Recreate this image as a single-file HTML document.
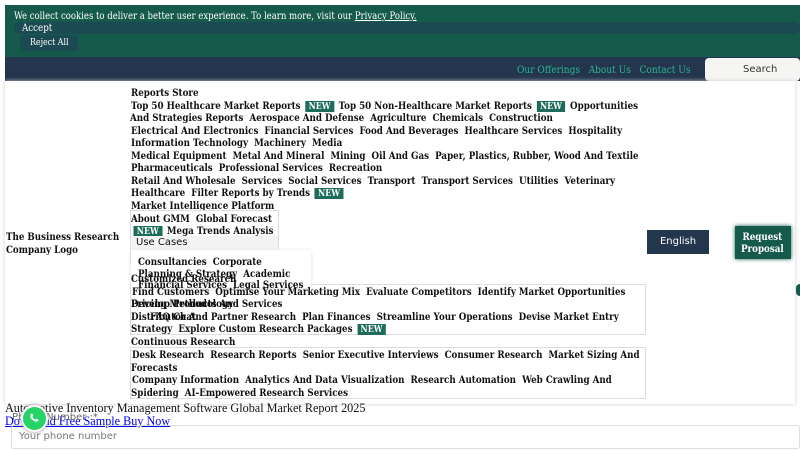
<!DOCTYPE html>
<html><head><meta charset="utf-8"><style>
*{margin:0;padding:0;box-sizing:border-box}
body{width:800px;height:450px;overflow:hidden;background:#fff;position:relative;font-family:"DejaVu Serif","Liberation Serif",serif;font-size:10.5px;font-weight:bold;color:#111}
.a{position:absolute;white-space:nowrap}
.c{transform:scaleX(.83);transform-origin:0 0}
.n{background:#1d6b5a;color:#fff;padding:0 4px;font-size:9.5px;margin:0 2px}
.l{position:absolute;white-space:nowrap;left:131px;transform:scaleX(.83) translateY(1px);transform-origin:0 0}
.box{position:absolute;border:1px solid #ddd;background:#fff}
</style></head><body>
<div class="a" style="left:5px;top:5px;width:795px;height:52px;background:#155a4b"></div>
<div class="a" style="left:5px;top:57px;width:795px;height:24px;background:#24364d"></div>
<div class="a" style="left:14px;top:10px;font-weight:normal;color:#fff;font-size:10.5px;transform:scaleX(.81);transform-origin:0 0">We collect cookies to deliver a better user experience. To learn more, visit our <u>Privacy Policy.</u></div>
<div class="a" style="left:14px;top:22px;width:786px;height:12px;background:#1b4a52;border-radius:6px"></div>
<div class="a c" style="left:22px;top:22px;font-weight:normal;color:#fff">Accept</div>
<div class="a" style="left:20px;top:35px;width:58px;height:16px;background:#1b4a52;border-radius:4px"></div>
<div class="a c" style="left:30px;top:37px;color:#fff;font-weight:normal;font-size:9.5px">Reject All</div>
<div class="a" style="left:517px;top:64px;color:#2bb592;font-weight:normal;font-size:10.5px;transform:scaleX(.86);transform-origin:0 0">Our Offerings&nbsp;&nbsp; About Us&nbsp;&nbsp; Contact Us</div>
<div class="a" style="left:705px;top:58px;width:95px;height:23px;background:#f5f5f3;border-radius:4px;font-family:'DejaVu Sans',sans-serif;font-weight:normal;font-size:10px;color:#333;padding:6px 0 0 38px">Search</div>
<div class="a" style="left:5px;top:81px;width:790px;height:323px;background:#fff;box-shadow:0 0 4px #ccc"></div>
<div class="a c" style="left:6px;top:231px;line-height:13px">The Business Research<br>Company Logo</div>
<div class="l" style="top:86px">Reports Store</div>
<div class="l" style="top:99px">Top 50 Healthcare Market Reports <span class="n">NEW</span> Top 50 Non-Healthcare Market Reports <span class="n">NEW</span> Opportunities</div>
<div class="l" style="left:130px;top:111px">And Strategies Reports&nbsp; Aerospace And Defense&nbsp; Agriculture&nbsp; Chemicals&nbsp; Construction</div>
<div class="l" style="top:124px">Electrical And Electronics&nbsp; Financial Services&nbsp; Food And Beverages&nbsp; Healthcare Services&nbsp; Hospitality</div>
<div class="l" style="top:136px">Information Technology&nbsp; Machinery&nbsp; Media</div>
<div class="l" style="top:149px">Medical Equipment&nbsp; Metal And Mineral&nbsp; Mining&nbsp; Oil And Gas&nbsp; Paper, Plastics, Rubber, Wood And Textile</div>
<div class="l" style="top:161px">Pharmaceuticals&nbsp; Professional Services&nbsp; Recreation</div>
<div class="l" style="top:174px">Retail And Wholesale&nbsp; Services&nbsp; Social Services&nbsp; Transport&nbsp; Transport Services&nbsp; Utilities&nbsp; Veterinary</div>
<div class="l" style="top:186px">Healthcare&nbsp; Filter Reports by Trends <span class="n">NEW</span></div>
<div class="l" style="top:199px">Market Intelligence Platform</div>
<div class="box" style="left:130px;top:210px;width:149px;height:55px"></div>
<div class="l" style="top:212px">About GMM&nbsp; Global Forecast</div>
<div class="l" style="top:224px"><span class="n" style="margin-left:3px">NEW</span> Mega Trends Analysis</div>
<div class="a" style="left:131px;top:236px;width:147px;height:14px;background:#f3f3f3;font-family:'DejaVu Sans',sans-serif;font-weight:normal;font-size:10px;padding:1px 0 0 5px">Use Cases</div>
<div class="box" style="left:130px;top:284px;width:516px;height:51px"></div>
<div class="box" style="left:130px;top:347px;width:516px;height:52px"></div>
<div class="a" style="left:131px;top:250px;width:180px;height:38px;background:#fff;box-shadow:0 1px 4px #ddd"></div>
<div class="l" style="left:138px;top:255px">Consultancies&nbsp; Corporate</div>
<div class="l" style="left:138px;top:267px">Planning &amp; Strategy&nbsp; Academic</div>
<div class="l" style="top:272px">Customized Research</div>
<div class="l" style="left:138px;top:278px">Financial Services&nbsp; Legal Services</div>
<div class="l" style="left:132px;top:285px">Find Customers&nbsp; Optimise Your Marketing Mix&nbsp; Evaluate Competitors&nbsp; Identify Market Opportunities</div>
<div class="l" style="top:297px">Develop Products And Services</div>
<div class="l" style="top:297px">Pricing Methodology</div>
<div class="l" style="top:310px">Distributor And Partner Research&nbsp; Plan Finances&nbsp; Streamline Your Operations&nbsp; Devise Market Entry</div>
<div class="l" style="left:150px;top:310px">FAQ Chat</div>
<div class="l" style="top:322px">Strategy&nbsp; Explore Custom Research Packages <span class="n">NEW</span></div>
<div class="l" style="top:335px">Continuous Research</div>
<div class="l" style="left:132px;top:348px">Desk Research&nbsp; Research Reports&nbsp; Senior Executive Interviews&nbsp; Consumer Research&nbsp; Market Sizing And</div>
<div class="l" style="top:361px">Forecasts</div>
<div class="l" style="left:132px;top:373px">Company Information&nbsp; Analytics And Data Visualization&nbsp; Research Automation&nbsp; Web Crawling And</div>
<div class="l" style="top:386px">Spidering&nbsp; AI-Empowered Research Services</div>
<div class="a" style="left:647px;top:230px;width:62px;height:24px;background:#24364d;color:#fff;font-family:'DejaVu Sans',sans-serif;font-weight:normal;font-size:10px;text-align:center;line-height:24px">English</div>
<div class="a" style="left:735px;top:226px;width:56px;height:33px;background:#155a4b;box-shadow:0 0 4px #155a4b"></div>
<div class="a c" style="left:741px;top:231px;color:#fff;text-align:center;line-height:12px">Request<br>Proposal</div>
<div class="a" style="left:796px;top:284px;width:4px;height:12px;background:#155a4b;border-radius:6px 0 0 6px"></div>
<div class="a" style="left:5px;top:401px;font-weight:normal;font-size:12.2px;font-family:'Liberation Serif',serif">Automotive Inventory Management Software Global Market Report 2025</div>
<div class="a" style="left:5px;top:414px;font-weight:normal;font-size:12.2px;color:#00e;text-decoration:underline;font-family:'Liberation Serif',serif">Download Free Sample Buy Now</div>
<div class="a" style="left:12px;top:412px;font-weight:normal;font-size:10px;color:#666;font-family:'DejaVu Sans',sans-serif">Phone Number :*</div>
<div class="a" style="left:11px;top:425px;width:789px;height:24px;border:1px solid #ddd;border-radius:3px;font-family:'DejaVu Sans',sans-serif;font-weight:normal;font-size:10px;color:#777;padding:5px 0 0 7px">Your phone number</div>
<div class="a" style="left:21px;top:405px;width:27px;height:27px;border-radius:50%;background:#25d366;border:2px solid #fff;box-shadow:0 0 4px #999"><svg width="23" height="23" viewBox="0 0 24 24"><path d="M8.5 7c.5-.5 1-.5 1.3.1l.8 1.7c.2.4 0 .7-.3 1l-.5.5c.6 1.3 1.6 2.3 2.9 2.9l.5-.5c.3-.3.6-.4 1-.3l1.7.8c.6.3.6.8.1 1.3-1 1-2.4 1.2-4.2.2S8.4 12.3 7.9 10.9 7.6 8 8.5 7z" fill="#fff"/></svg></div>
</body></html>
